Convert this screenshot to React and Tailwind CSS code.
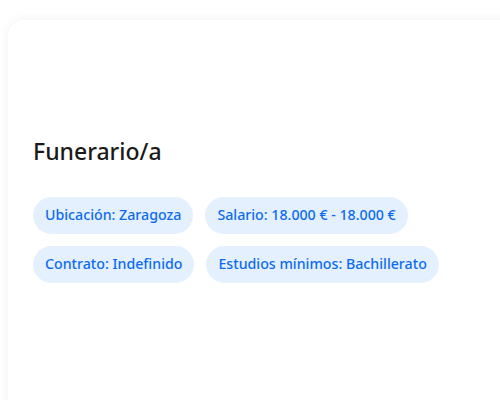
export default function App() {
  const chips = [
    "Ubicación: Zaragoza",
    "Salario: 18.000 € - 18.000 €",
    "Contrato: Indefinido",
    "Estudios mínimos: Bachillerato",
  ];

  return (
    <div
      className="w-[500px] h-[400px] overflow-hidden bg-white pl-2 pt-5"
      style={{ fontFamily: '"Noto Sans", sans-serif' }}
    >
      <div className="w-[520px] h-[420px] rounded-2xl bg-white shadow-[0_0_12px_rgba(0,0,0,0.06)] px-[25px] pt-[118px]">
        <h1 className="text-[23px] leading-[1.2] font-medium text-[#1a1a1a]">Funerario/a</h1>
        <div className="mt-[31px] flex flex-wrap gap-3 w-[420px]">
          {chips.map((c) => (
            <span
              key={c}
              className="h-[37px] flex items-center px-3 rounded-full bg-[#e5f0ff] text-[#0b6cf2] text-[14.2px] font-medium"
            >
              {c}
            </span>
          ))}
        </div>
      </div>
    </div>
  );
}
